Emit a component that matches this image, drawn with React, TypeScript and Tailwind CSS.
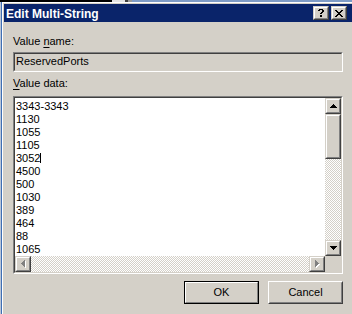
import React from 'react';

const ports = ['3343-3343', '1130', '1055', '1105', '3052', '4500', '500', '1030', '389', '464', '88', '1065'];

const checker = 'bg-[image:repeating-conic-gradient(#ffffff_0_25%,#d4d0c8_0_50%)] bg-[length:2px_2px]';

function ScrollButton({ children, className = '' }: { children?: React.ReactNode; className?: string }) {
  return (
    <div className={`flex border border-t-[#d4d0c8] border-l-[#d4d0c8] border-b-[#404040] border-r-[#404040] ${className}`}>
      <div className="flex-1 flex items-center justify-center bg-[#d4d0c8] border border-t-white border-l-white border-b-[#808080] border-r-[#808080]">
        {children}
      </div>
    </div>
  );
}

function ArrowUp() {
  return (
    <svg width="7" height="4" viewBox="0 0 7 4" shapeRendering="crispEdges">
      <path d="M3 0h1v1H3zM2 1h3v1H2zM1 2h5v1H1zM0 3h7v1H0z" fill="#000" />
    </svg>
  );
}

function ArrowDown() {
  return (
    <svg width="7" height="4" viewBox="0 0 7 4" shapeRendering="crispEdges">
      <path d="M0 0h7v1H0zM1 1h5v1H1zM2 2h3v1H2zM3 3h1v1H3z" fill="#000" />
    </svg>
  );
}

function ArrowLeftDisabled() {
  const d = 'M0 3h1v1H0zM1 2h1v3H1zM2 1h1v5H2zM3 0h1v7H3z';
  return (
    <svg width="5" height="8" viewBox="0 0 5 8" shapeRendering="crispEdges">
      <path d={d} fill="#fff" transform="translate(1 1)" />
      <path d={d} fill="#808080" />
    </svg>
  );
}

function ArrowRightDisabled() {
  const d = 'M0 0h1v7H0zM1 1h1v5H1zM2 2h1v3H2zM3 3h1v1H3z';
  return (
    <svg width="5" height="8" viewBox="0 0 5 8" shapeRendering="crispEdges">
      <path d={d} fill="#fff" transform="translate(1 1)" />
      <path d={d} fill="#808080" />
    </svg>
  );
}

function CaptionButton({ children }: { children: React.ReactNode }) {
  return (
    <div className="w-[16px] h-[14px] flex border border-t-[#d4d0c8] border-l-[#d4d0c8] border-b-[#404040] border-r-[#404040]">
      <div className="flex-1 flex items-center justify-center bg-[#d4d0c8] border border-t-white border-l-white border-b-[#808080] border-r-[#808080]">
        {children}
      </div>
    </div>
  );
}

function Sunken({ children, className = '', inner = '' }: { children: React.ReactNode; className?: string; inner?: string }) {
  return (
    <div className={`flex border border-t-[#808080] border-l-[#808080] border-b-white border-r-white ${className}`}>
      <div className={`flex-1 min-w-0 border border-t-[#404040] border-l-[#404040] border-b-[#d4d0c8] border-r-[#d4d0c8] ${inner}`}>
        {children}
      </div>
    </div>
  );
}

export default function App() {
  return (
    <div className="w-[352px] h-[314px] overflow-hidden bg-[#d4d0c8] flex flex-col font-['Liberation_Sans',Arial,sans-serif] text-[11px] leading-[13px] text-black">
      <div className="h-[2px] flex shrink-0">
        <div className="w-[112px] bg-black" />
        <div className="w-[13px] bg-[#e4e4e4]" />
        <div className="w-[3px] bg-[#404040]" />
        <div className="w-[4px] bg-[#9a9a9a]" />
        <div className="flex-1 bg-[#7f9cc6]" />
      </div>

      <div className="flex-1 flex min-h-0">
        <div className="w-px bg-[#b8c4d6]" />
        <div className="w-px bg-[#3f6fb4]" />

        <div className="flex-1 min-w-0 flex flex-col border-l border-t border-white pl-px pt-px">
          {/* caption */}
          <div className="h-[18px] shrink-0 bg-[#0a246a] flex items-start">
            <span className="flex-1 pl-[2px] mt-[4px] text-white font-bold text-[12px] leading-[13px]">Edit Multi-String</span>
            <div className="self-center flex gap-[2px] mr-[5px]">
              <CaptionButton>
                <svg width="6" height="8" viewBox="0 0 6 8" shapeRendering="crispEdges">
                  <path d="M1 0h4v1H1zM0 1h2v1H0zM4 1h2v2H4zM3 3h2v1H3zM2 4h2v1H2zM2 6h2v2H2z" fill="#000" />
                </svg>
              </CaptionButton>
              <CaptionButton>
                <svg width="8" height="7" viewBox="0 0 8 7" shapeRendering="crispEdges">
                  <path
                    d="M0 0h2v1H0zM6 0h2v1H6zM1 1h2v1H1zM5 1h2v1H5zM2 2h4v1H2zM3 3h2v1H3zM2 4h4v1H2zM1 5h2v1H1zM5 5h2v1H5zM0 6h2v1H0zM6 6h2v1H6z"
                    fill="#000"
                  />
                </svg>
              </CaptionButton>
            </div>
          </div>

          {/* body */}
          <div className="flex-1 flex flex-col px-[9px] pt-[13px]">
            <div className="h-[13px]">
              Value <span className="underline underline-offset-2">n</span>ame:
            </div>

            <Sunken className="mt-[4px] h-[20px]" inner="bg-[#d4d0c8] pl-px pt-px">
              ReservedPorts
            </Sunken>

            <div className="mt-[5px] h-[13px]">
              <span className="underline underline-offset-2">V</span>alue data:
            </div>

            <Sunken className="mt-[6px] h-[178px]" inner="flex flex-col bg-white">
              <div className="flex-1 flex min-h-0">
                <div className="flex-1 pt-[2px] pl-px overflow-hidden">
                  {ports.map((p, i) => (
                    <div key={i} className="h-[13px] whitespace-nowrap">
                      {p}
                      {i === 4 && <span className="inline-block w-px h-[10px] bg-black align-[-1px]" />}
                    </div>
                  ))}
                </div>
                <div className="w-[16px] flex flex-col">
                  <ScrollButton className="h-[16px]">
                    <ArrowUp />
                  </ScrollButton>
                  <ScrollButton className="h-[45px]" />
                  <div className={`flex-1 ${checker}`} />
                  <ScrollButton className="h-[16px]">
                    <ArrowDown />
                  </ScrollButton>
                </div>
              </div>
              <div className="h-[16px] flex">
                <ScrollButton className="w-[16px]">
                  <ArrowLeftDisabled />
                </ScrollButton>
                <div className={`flex-1 ${checker}`} />
                <ScrollButton className="w-[16px]">
                  <ArrowRightDisabled />
                </ScrollButton>
                <div className="w-[16px] bg-[#d4d0c8]" />
              </div>
            </Sunken>

            <div className="mt-[7px] flex justify-end gap-[9px]">
              <div className="w-[75px] h-[23px] flex border border-black">
                <div className="flex-1 flex items-center justify-center border border-t-white border-l-white border-b-[#808080] border-r-[#808080]">
                  OK
                </div>
              </div>
              <div className="w-[75px] h-[23px] flex border border-t-white border-l-white border-b-[#404040] border-r-[#404040]">
                <div className="flex-1 flex items-center justify-center border border-t-[#d4d0c8] border-l-[#d4d0c8] border-b-[#808080] border-r-[#808080]">
                  Cancel
                </div>
              </div>
            </div>
          </div>
        </div>
      </div>
    </div>
  );
}
